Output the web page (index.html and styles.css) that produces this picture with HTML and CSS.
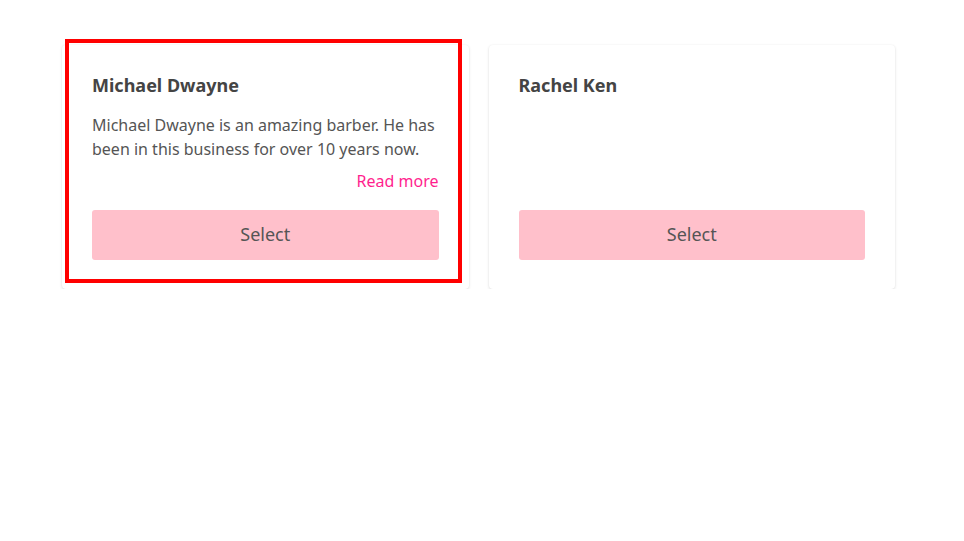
FILE: index.html
```html
<!DOCTYPE html>
<html lang="en">
<head>
<meta charset="utf-8">
<title>Barbers</title>
<link rel="stylesheet" href="styles.css">
</head>
<body>
<main class="cards">
  <article class="card card--selected">
    <h2 class="card-title">Michael Dwayne</h2>
    <p class="card-desc">Michael Dwayne is an amazing barber. He has been in this business for over 10 years now.</p>
    <a class="card-more" href="#">Read more</a>
    <button class="card-btn" type="button">Select</button>
    <span class="card-highlight" aria-hidden="true"></span>
  </article>
  <article class="card">
    <h2 class="card-title">Rachel Ken</h2>
    <button class="card-btn" type="button">Select</button>
  </article>
</main>
</body>
</html>
```
FILE: styles.css
```css
* { box-sizing: border-box; }
html, body { margin: 0; padding: 0; background: #fff; }
body {
  font-family: "Noto Sans", "Open Sans", sans-serif;
  color: #555;
}
.cards {
  display: grid;
  grid-template-columns: 1fr 1fr;
  gap: 20px;
  width: 833px;
  margin: 45px 0 0 62px;
}
.card {
  position: relative;
  display: flex;
  flex-direction: column;
  background: #fff;
  border-radius: 4px;
  box-shadow: 0 1px 3px rgba(0, 0, 0, 0.13), 0 0 2px rgba(0, 0, 0, 0.04);
  padding: 28px 30px 29px;
}
.card-title {
  margin: 0;
  font-size: 18px;
  line-height: 24px;
  font-weight: 700;
  color: #444;
}
.card-desc {
  margin: 16px 0 0;
  font-size: 16px;
  line-height: 24px;
  color: #555;
}
.card-more {
  margin-top: 8px;
  align-self: flex-end;
  font-size: 16px;
  line-height: 24px;
  color: #ff1f8e;
  text-decoration: none;
}
.card-btn {
  margin-top: auto;
  height: 50px;
  width: 100%;
  border: none;
  border-radius: 3px;
  background: #ffc0cb;
  color: #555;
  font-family: inherit;
  font-size: 18px;
  line-height: 24px;
  padding: 0 0 2px;
}
.card--selected .card-btn { margin-top: 17px; }
.card-highlight {
  position: absolute;
  left: 3px;
  top: -6px;
  width: 397px;
  height: 244px;
  border: 4px solid #ff0000;
  pointer-events: none;
}
```
